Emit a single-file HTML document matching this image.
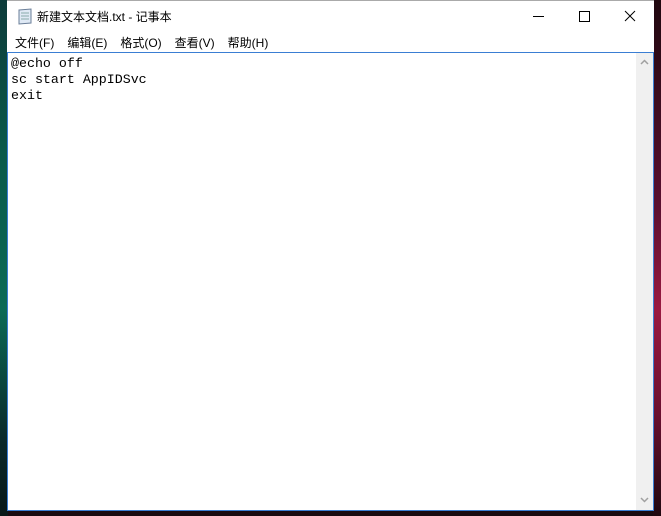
<!DOCTYPE html>
<html><head><meta charset="utf-8"><style>
body{margin:0;width:661px;height:516px;overflow:hidden;position:relative;background:#1a0a10;font-family:"Liberation Sans","Noto Sans CJK SC",sans-serif}
.dl{position:absolute;left:0;top:0;width:8px;height:516px;background:linear-gradient(#0c3b3a,#0a5a4a 30%,#0b6a55 60%,#0a2a2a 85%,#081818)}
.dr{position:absolute;left:653px;top:0;width:8px;height:516px;background:linear-gradient(#200810,#5a1030 40%,#9a1840 60%,#6a1030 80%,#200810)}
.win{position:absolute;left:7px;top:0;width:647px;height:510px;background:#fff;border-top:1px solid #aaa}
.title{position:absolute;left:30px;top:7px;font-size:12px;color:#000}
.menu{position:absolute;left:8px;top:33px;font-size:12px;color:#000}
.menu span{margin-right:13px}
.edit{position:absolute;left:0;top:51px;width:645px;height:457px;border:1px solid #3a7ed3;background:#fff}
.txt{position:absolute;left:3px;top:3px;font-family:"Liberation Mono",monospace;font-size:13.3px;line-height:16px;white-space:pre;color:#000}
.sb{position:absolute;right:0;top:0;width:17px;height:457px;background:#f0f0f0}
</style></head><body>
<div class="dl"></div><div class="dr"></div>
<div class="win">
<svg style="position:absolute;left:9px;top:6px" width="18" height="18"><path d="M3 3 L15 2 L15 16 L3 17 Z" fill="#dfe9f5" stroke="#6a7e98"/><line x1="5" y1="6" x2="13" y2="6" stroke="#8aa"/><line x1="5" y1="9" x2="13" y2="9" stroke="#8aa"/><line x1="5" y1="12" x2="13" y2="12" stroke="#8aa"/></svg>
<div class="title">新建文本文档.txt - 记事本</div>
<svg style="position:absolute;left:520px;top:8px" width="120" height="16"><line x1="6" y1="7.5" x2="17" y2="7.5" stroke="#000"/><rect x="52.5" y="2.5" width="10" height="10" fill="none" stroke="#000"/><path d="M98 2 L108 12 M108 2 L98 12" stroke="#000"/></svg>
<div class="menu"><span>文件(F)</span><span>编辑(E)</span><span>格式(O)</span><span>查看(V)</span><span>帮助(H)</span></div>
<div class="edit"><div class="txt">@echo off
sc start AppIDSvc
exit</div>
<div class="sb"><svg width="17" height="457"><path d="M5 11 L8.5 7.5 L12 11" fill="none" stroke="#a0a0a0" stroke-width="1.5"/><path d="M5 445 L8.5 448.5 L12 445" fill="none" stroke="#a0a0a0" stroke-width="1.5"/></svg></div>
</div>
</div>
</body></html>
